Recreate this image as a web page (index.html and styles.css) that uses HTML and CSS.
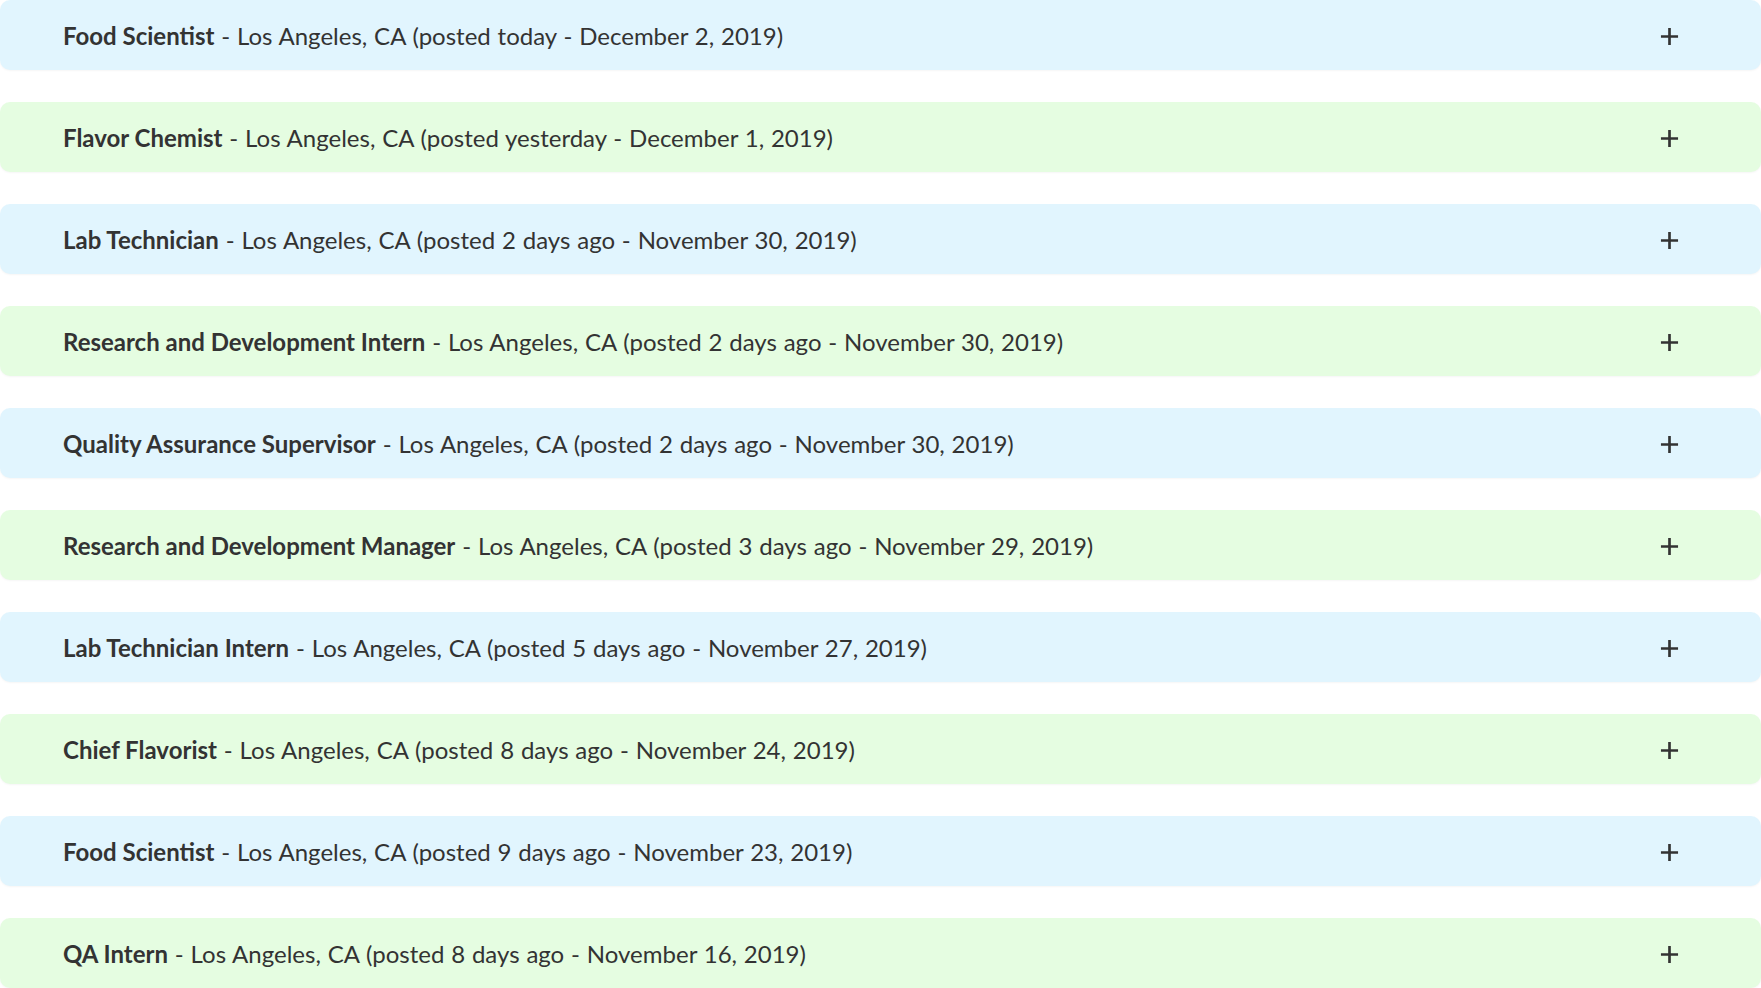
FILE: index.html
```html
<!DOCTYPE html>
<html lang="en">
<head>
<meta charset="utf-8">
<title>Jobs</title>
<link rel="stylesheet" href="styles.css">
</head>
<body>
<ul class="jobs">
  <li class="job blue"><span class="txt"><b>Food Scientist</b> - Los Angeles, CA (posted today - December 2, 2019)</span><svg class="plus" viewBox="0 0 20 20"><path d="M10 1v18M1 10h18"/></svg></li>
  <li class="job green"><span class="txt"><b>Flavor Chemist</b> - Los Angeles, CA (posted yesterday - December 1, 2019)</span><svg class="plus" viewBox="0 0 20 20"><path d="M10 1v18M1 10h18"/></svg></li>
  <li class="job blue"><span class="txt"><b>Lab Technician</b> - Los Angeles, CA (posted 2 days ago - November 30, 2019)</span><svg class="plus" viewBox="0 0 20 20"><path d="M10 1v18M1 10h18"/></svg></li>
  <li class="job green"><span class="txt"><b>Research and Development Intern</b> - Los Angeles, CA (posted 2 days ago - November 30, 2019)</span><svg class="plus" viewBox="0 0 20 20"><path d="M10 1v18M1 10h18"/></svg></li>
  <li class="job blue"><span class="txt"><b>Quality Assurance Supervisor</b> - Los Angeles, CA (posted 2 days ago - November 30, 2019)</span><svg class="plus" viewBox="0 0 20 20"><path d="M10 1v18M1 10h18"/></svg></li>
  <li class="job green"><span class="txt"><b>Research and Development Manager</b> - Los Angeles, CA (posted 3 days ago - November 29, 2019)</span><svg class="plus" viewBox="0 0 20 20"><path d="M10 1v18M1 10h18"/></svg></li>
  <li class="job blue"><span class="txt"><b>Lab Technician Intern</b> - Los Angeles, CA (posted 5 days ago - November 27, 2019)</span><svg class="plus" viewBox="0 0 20 20"><path d="M10 1v18M1 10h18"/></svg></li>
  <li class="job green"><span class="txt"><b>Chief Flavorist</b> - Los Angeles, CA (posted 8 days ago - November 24, 2019)</span><svg class="plus" viewBox="0 0 20 20"><path d="M10 1v18M1 10h18"/></svg></li>
  <li class="job blue"><span class="txt"><b>Food Scientist</b> - Los Angeles, CA (posted 9 days ago - November 23, 2019)</span><svg class="plus" viewBox="0 0 20 20"><path d="M10 1v18M1 10h18"/></svg></li>
  <li class="job green"><span class="txt"><b>QA Intern</b> - Los Angeles, CA (posted 8 days ago - November 16, 2019)</span><svg class="plus" viewBox="0 0 20 20"><path d="M10 1v18M1 10h18"/></svg></li>
</ul>
</body>
</html>
```

FILE: styles.css
```css
html, body {
  margin: 0;
  padding: 0;
  background: #ffffff;
}
body {
  font-family: Lato, "Open Sans", sans-serif;
  color: #333333;
  overflow: hidden;
}
.jobs {
  list-style: none;
  margin: 0;
  padding: 0;
  display: flex;
  flex-direction: column;
  gap: 32px;
}
.job {
  height: 70px;
  box-sizing: border-box;
  display: flex;
  align-items: center;
  justify-content: space-between;
  padding: 0 82px 0 63px;
  border-radius: 10px;
  box-shadow: 0 1px 2px rgba(0, 0, 0, 0.04);
}
.blue { background: #e1f5fe; }
.green { background: #e5fde1; }
.txt {
  font-size: 24px;
  line-height: 1;
  white-space: nowrap;
  padding-top: 1px;
  word-spacing: 0.7px;
}
.txt b {
  font-weight: 700;
  word-spacing: 0;
}
.plus {
  width: 19px;
  height: 19px;
  flex: none;
  margin-top: 3px;
  stroke: #333333;
  stroke-width: 2.8;
  fill: none;
}
```
